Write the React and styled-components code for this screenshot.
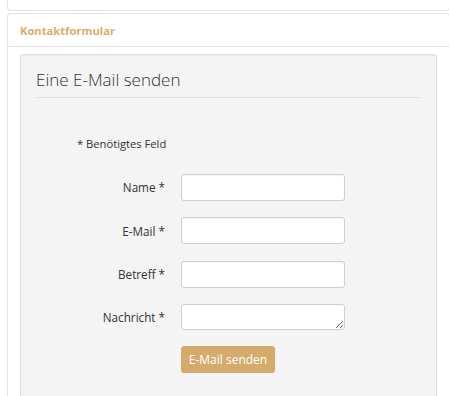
import React from "react";
import styled, { createGlobalStyle } from "styled-components";

const Global = createGlobalStyle`
  html, body { margin: 0; padding: 0; background: #fff; overflow: hidden; }
  body { font-family: "Open Sans", "Liberation Sans", sans-serif; color: #333; }
  * { box-sizing: border-box; }
`;

const Page = styled.div`
  padding-left: 7px;
  width: 449px;
  height: 396px;
  overflow: hidden;
`;

const TopCard = styled.div`
  width: 443px;
  height: 11px;
  border: 1px solid #e3e3e3;
  border-top: none;
  border-radius: 0 0 4px 4px;
  background: #fff;
`;

const Card = styled.div`
  margin-top: 2px;
  width: 443px;
  border: 1px solid #e3e3e3;
  border-bottom: none;
  border-radius: 4px 4px 0 0;
  background: #fff;
  height: 400px;
`;

const CardHeader = styled.div`
  height: 33px;
  padding: 0 12px;
  display: flex;
  align-items: center;
  border-bottom: 1px solid #e3e3e3;
  font-size: 11.2px;
  font-weight: 700;
  color: #dbac6b;
`;

const CardBody = styled.div`
  padding: 7px 12px 0 12px;
`;

const Well = styled.div`
  background: #f4f4f4;
  border: 1px solid #e1e1e1;
  border-bottom: none;
  border-radius: 3px 3px 0 0;
  box-shadow: inset 0 1px 1px rgba(0, 0, 0, 0.05);
  padding: 9px 16px 0 15px;
  height: 360px;
`;

const Legend = styled.div`
  font-size: 17px;
  font-weight: 300;
  color: #333;
  line-height: 32px;
  padding-bottom: 1px;
  border-bottom: 1px solid #e2e2e2;
`;

const Form = styled.div`
  display: grid;
  grid-template-columns: 129px 164px;
  column-gap: 16px;
  row-gap: 16.5px;
  align-items: center;
  margin-top: 38px;
`;

const Note = styled.div`
  grid-column: 1 / -1;
  padding-left: 41px;
  font-size: 11.2px;
  line-height: 16px;
  margin-bottom: 5px;
`;

const Label = styled.label`
  text-align: right;
  font-size: 11.7px;
  color: #333;
`;

const Input = styled.input`
  height: 27px;
  width: 164px;
  border: 1px solid #cfcfcf;
  border-radius: 3px;
  background: #fff;
  box-shadow: inset 0 1px 1px rgba(0, 0, 0, 0.04);
  font-family: inherit;
  outline: none;
`;

const TextArea = styled.textarea`
  display: block;
  height: 26px;
  width: 164px;
  border: 1px solid #cfcfcf;
  border-radius: 3px;
  background: #fff;
  resize: vertical;
  font-family: inherit;
  outline: none;
`;

const Button = styled.button`
  width: 94px;
  height: 27px;
  border: 1px solid #ceaa6c;
  border-radius: 3px;
  background: #d4ab6b;
  color: #fff;
  font-family: inherit;
  font-size: 12px;
  padding: 0;
  margin-top: -0.5px;
`;

const fields = ["Name", "E-Mail", "Betreff"];

export default function App() {
  return (
    <>
      <Global />
      <Page>
        <TopCard />
        <Card>
          <CardHeader>Kontaktformular</CardHeader>
          <CardBody>
            <Well>
              <Legend>Eine E-Mail senden</Legend>
              <Form>
                <Note>* Benötigtes Feld</Note>
                {fields.map((f) => (
                  <React.Fragment key={f}>
                    <Label>{f} *</Label>
                    <Input type="text" />
                  </React.Fragment>
                ))}
                <Label>Nachricht *</Label>
                <TextArea />
                <span />
                <Button>E-Mail senden</Button>
              </Form>
            </Well>
          </CardBody>
        </Card>
      </Page>
    </>
  );
}
